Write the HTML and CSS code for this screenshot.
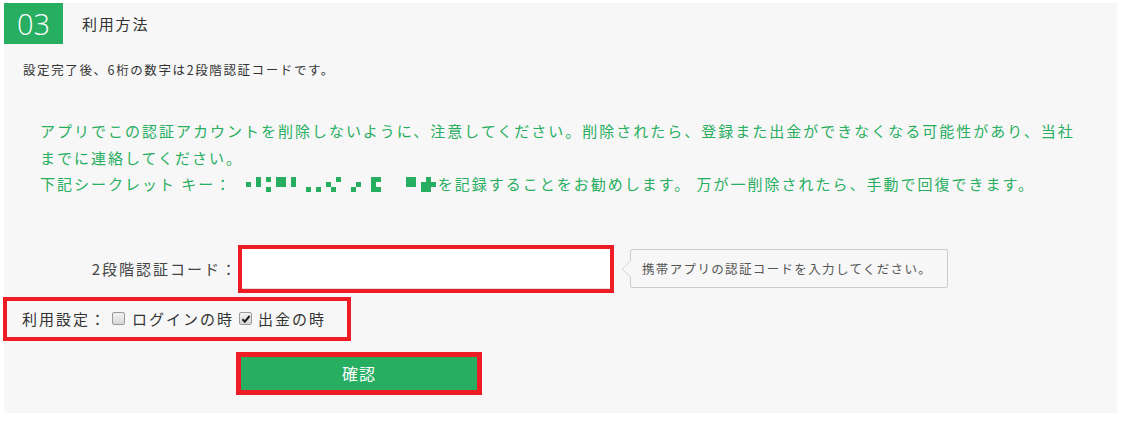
FILE: index.html
```html
<!DOCTYPE html>
<html lang="ja">
<head>
<meta charset="utf-8">
<title>利用方法</title>
<link rel="stylesheet" href="styles.css">
</head>
<body>
<div class="panel">
  <div class="head">
    <div class="num">03</div>
    <div class="title">利用方法</div>
  </div>
  <p class="desc">設定完了後、6桁の数字は2段階認証コードです。</p>
  <div class="notice">
    <p>アプリでこの認証アカウントを削除しないように、注意してください。削除されたら、登録また出金ができなくなる可能性があり、当社までに連絡してください。</p>
    <p>下記シークレット キー： <svg class="key" width="190" height="15" viewBox="0 0 190 15"><g fill="#27ae60"><rect x="0" y="5" width="5" height="5"/><rect x="10" y="0" width="5" height="10"/><rect x="20" y="0" width="5" height="5"/><rect x="20" y="10" width="5" height="5"/><rect x="30" y="0" width="10" height="10"/><rect x="45" y="0" width="5" height="10"/><rect x="60" y="10" width="5" height="5"/><rect x="70" y="10" width="5" height="5"/><rect x="80" y="5" width="5" height="5"/><rect x="85" y="10" width="5" height="5"/><rect x="90" y="0" width="5" height="5"/><rect x="105" y="10" width="5" height="5"/><rect x="110" y="5" width="5" height="5"/><path d="M125 0h10v5h-5v5h5v5h-10z"/><rect x="160" y="0" width="10" height="10"/><path d="M180 0h5v5h5v5h-5v5h-10v-10h5z"/></g></svg>を記録することをお勧めします。 万が一削除されたら、手動で回復できます。</p>
  </div>
  <div class="row-code">
    <label class="code-label">2段階認証コード：</label>
    <div class="code-box"><input class="code-input" type="text"></div>
    <div class="tip">携帯アプリの認証コードを入力してください。</div>
  </div>
  <div class="row-use">
    <span>利用設定：</span>
    <span class="cb"></span>
    <span>ログインの時</span>
    <span class="cb checked"><svg width="10" height="10" viewBox="0 0 10 10"><path d="M1.5 5.2l2.3 2.5L8.6 2" fill="none" stroke="#222" stroke-width="2"/></svg></span>
    <span>出金の時</span>
  </div>
  <div class="row-btn">
    <div class="btn-box"><button class="btn" type="button">確認</button></div>
  </div>
</div>
</body>
</html>
```
FILE: styles.css
```css
* { box-sizing: border-box; }
html, body { margin: 0; padding: 0; background: #fff; }
body {
  font-family: "Noto Sans CJK JP", "Noto Sans", sans-serif;
  color: #3a3a3a;
}
.panel {
  margin: 3px 0 0 4px;
  width: 1113px;
  height: 410px;
  background: #f7f7f7;
}
.head {
  display: flex;
  align-items: center;
  height: 41px;
}
.num {
  width: 59px;
  height: 41px;
  background: #27ae60;
  color: #fff;
  font-family: "Open Sans", sans-serif;
  font-size: 29px;
  font-weight: 300;
  line-height: 41px;
  text-align: center;
}
.title {
  margin-left: 19px;
  font-size: 15px;
  letter-spacing: 1.8px;
  color: #333;
}
.desc {
  margin: 16px 0 0 19px;
  font-size: 12.5px;
  letter-spacing: 1.6px;
  line-height: 20px;
  color: #333;
}
.notice {
  margin-top: 38px;
  padding: 0 30px 0 36px;
  color: #27ae60;
  font-size: 15px;
  letter-spacing: 2px;
  line-height: 26.5px;
}
.notice p { margin: 0; }
.key { vertical-align: -2px; margin: 0 2px 0 8px; }
.row-code {
  display: flex;
  align-items: center;
  margin-top: 47px;
  height: 48px;
}
.code-label {
  width: 234px;
  text-align: right;
  font-size: 15px;
  letter-spacing: 2px;
  color: #444;
}
.code-box {
  width: 376px;
  height: 48px;
  border: 4px solid #ee1c25;
  background: #fff;
}
.code-input {
  display: block;
  width: 100%;
  height: 100%;
  border: 0;
  border-bottom: 1px solid #ddd;
  background: #fff;
  outline: none;
}
.tip {
  position: relative;
  margin-left: 16px;
  width: 318px;
  height: 39px;
  border: 1px solid #c8cccc;
  border-radius: 2px;
  background: #f7f7f7;
  padding-left: 11px;
  font-size: 12.5px;
  letter-spacing: 1.35px;
  line-height: 37px;
  color: #555;
}
.tip::before {
  content: "";
  position: absolute;
  left: -7px;
  top: 13px;
  width: 11px;
  height: 11px;
  background: #f7f7f7;
  border-left: 1px solid #dde0e0;
  border-bottom: 1px solid #dde0e0;
  transform: rotate(45deg);
}
.row-use {
  display: flex;
  align-items: center;
  margin: 4px 0 0 -1px;
  width: 348px;
  height: 44px;
  border: 4px solid #ee1c25;
  padding-left: 15px;
  font-size: 15px;
  letter-spacing: 2px;
  color: #333;
}
.cb {
  display: inline-flex;
  align-items: center;
  justify-content: center;
  width: 13px;
  height: 13px;
  margin: 0 7px 0 5px;
  border: 1px solid #9a9a9a;
  border-radius: 2px;
  background: linear-gradient(#f2f2f2, #d8d8d8);
}
.cb.checked { margin: 0 6px 0 5px; }
.row-btn {
  margin: 11px 0 0 232px;
}
.btn-box {
  width: 246px;
  height: 43px;
  border: 5px solid #ee1c25;
}
.btn {
  display: block;
  width: 100%;
  height: 100%;
  border: 0;
  background: #27ae60;
  color: #fff;
  font-family: "Noto Sans CJK JP", sans-serif;
  font-size: 16px;
  letter-spacing: 1px;
  padding: 0;
}
```
